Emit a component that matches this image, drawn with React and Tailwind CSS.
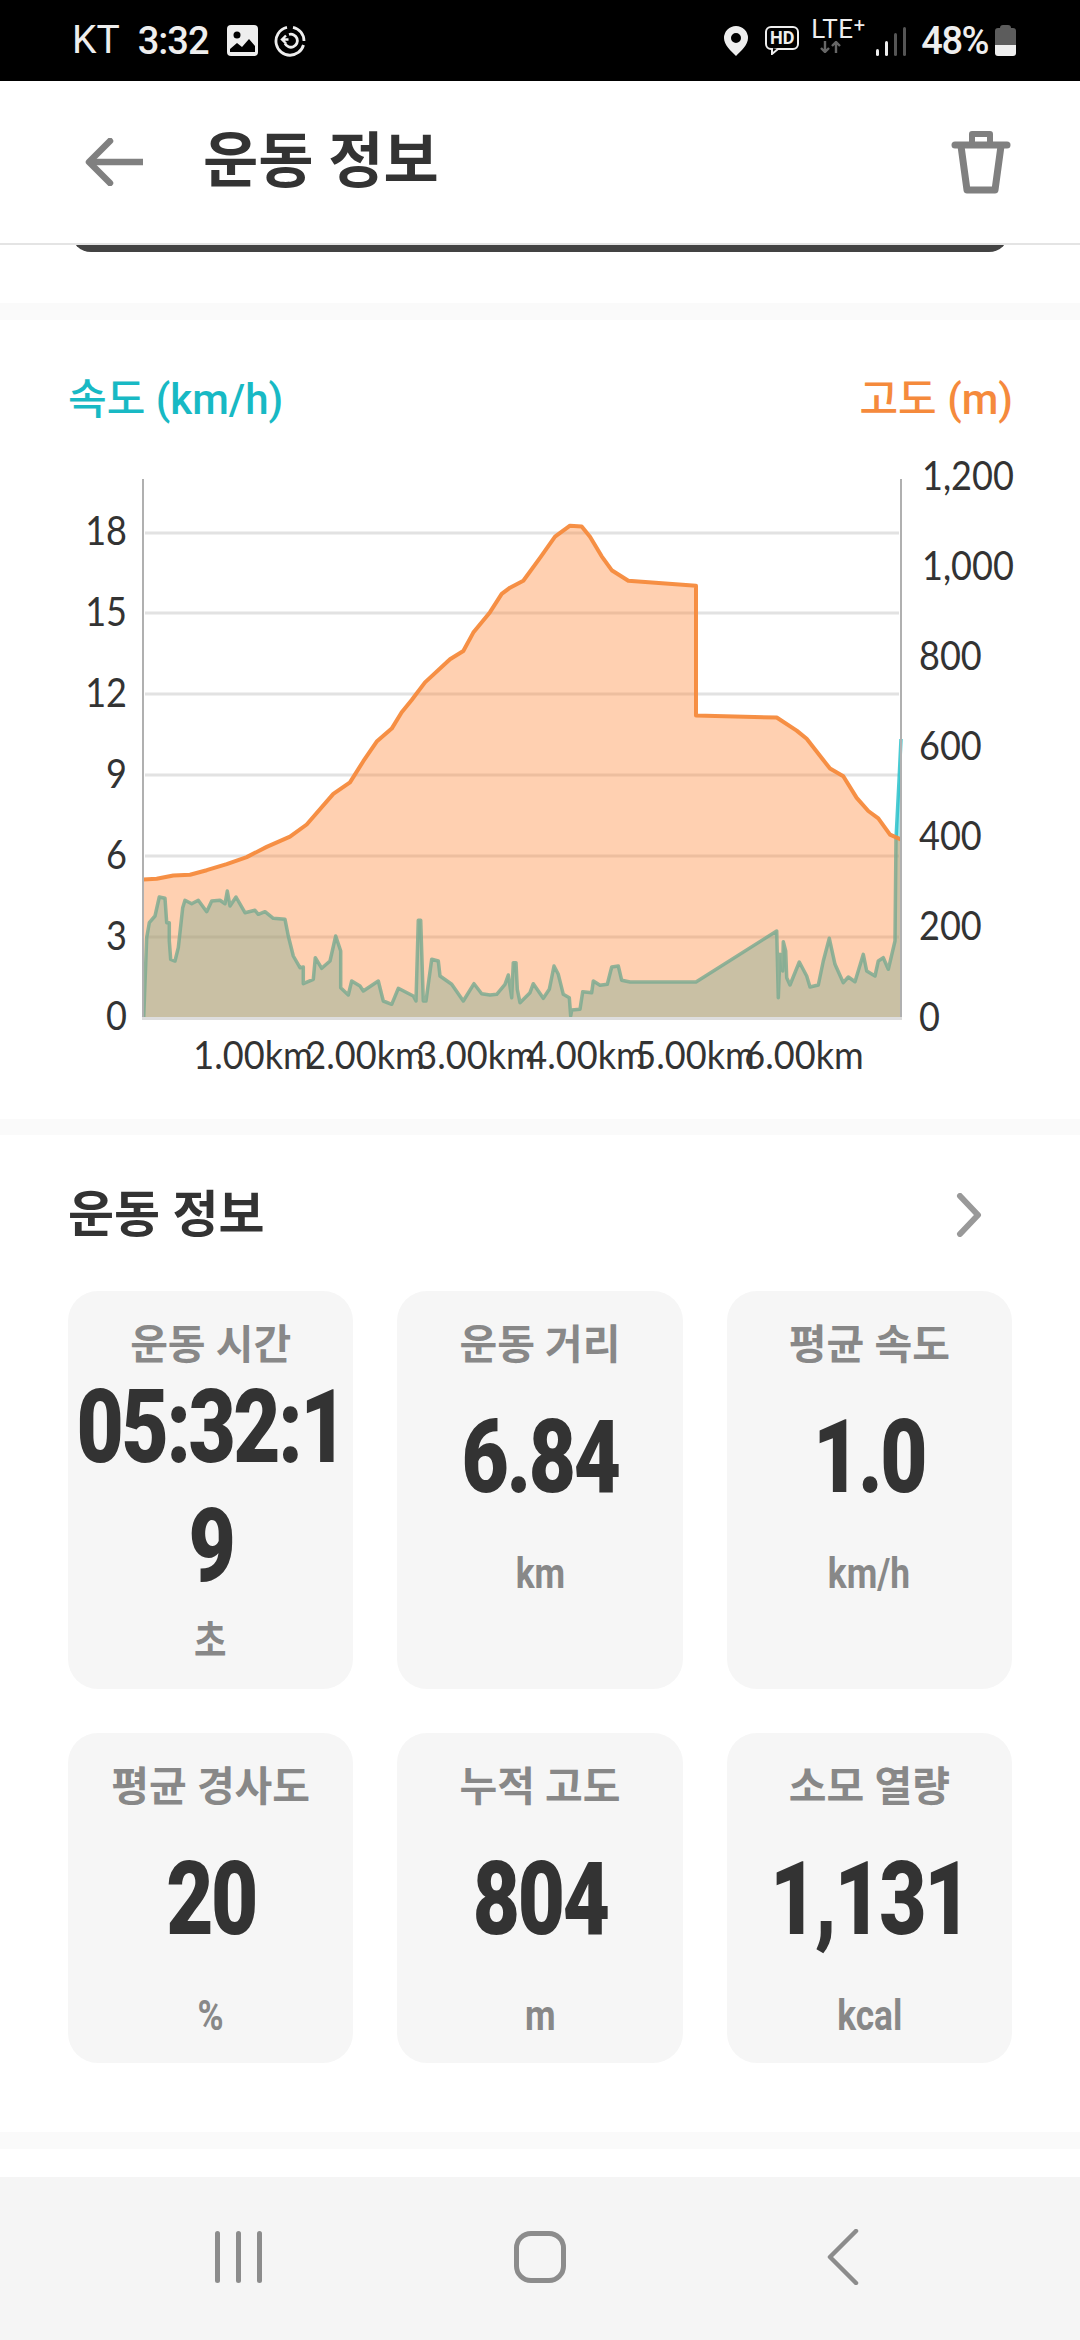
// Sample tables are kept in their own grid units, then mapped to chart coordinates
const scale = (pts, ox, oy, sx, sy) => pts.map(([x, y]) => [ox + x / sx, oy + y / sy])

const elevation = [
  ...scale([
    [310, 1050], [350, 1048], [400, 1040], [450, 1038], [500, 1027], [560, 1012], [620, 995], [680, 970],
    [750, 945], [800, 915], [880, 840], [930, 812], [970, 760], [1010, 712], [1055, 680], [1085, 640],
    [1115, 610], [1155, 567], [1230, 510], [1270, 490], [1300, 445], [1350, 395], [1385, 350], [1410, 335],
    [1450, 318], [1500, 262],
  ], 40, 450, 3, 2.45),
  ...scale([
    [45, 210], [90, 183], [125, 185], [150, 210], [185, 258], [215, 292], [265, 318], [468, 330], [468, 648],
    [710, 653], [770, 685], [800, 705], [870, 778], [910, 797], [950, 850], [985, 882], [1015, 900],
    [1050, 940], [1084, 952],
  ], 540, 450, 3, 2.45),
]

const speed = [
  ...scale([
    [41, 468], [50, 230], [58, 185], [75, 165], [88, 108], [105, 112], [110, 185], [118, 185], [118, 240],
    [122, 295], [135, 300], [145, 260], [158, 140], [165, 118], [185, 128], [205, 118], [230, 152], [245, 120],
    [270, 118], [285, 128], [292, 90], [300, 135], [318, 108], [345, 155], [375, 148], [385, 160], [405, 152],
    [430, 172], [465, 175], [475, 225], [490, 285], [510, 320], [520, 318], [520, 368], [550, 355], [556, 290],
    [575, 322], [600, 300], [617, 225], [632, 270], [632, 380], [655, 402], [665, 360], [690, 375], [700, 390],
    [745, 360], [760, 420], [785, 430], [805, 382], [850, 405], [858, 420], [865, 178], [872, 178], [880, 420],
    [888, 420], [905, 295], [925, 300], [930, 345], [965, 370], [1000, 420], [1032, 368], [1055, 398],
    [1080, 402], [1100, 400], [1125, 370], [1135, 342], [1145, 410], [1150, 305], [1158, 305], [1162, 385],
    [1170, 425],
  ], 130, 860, 3, 3),
  ...scale([
    [0, 395], [10, 368], [40, 412], [58, 385], [72, 315], [85, 340], [100, 400], [118, 410], [122, 465],
    [125, 447], [150, 445], [158, 392], [185, 395], [190, 360], [210, 373], [232, 370], [245, 318], [265, 315],
    [275, 358], [300, 363], [498, 363], [740, 210], [745, 410], [750, 280], [758, 330], [760, 242], [767, 270],
    [770, 350], [780, 372], [808, 303], [830, 345], [840, 378], [865, 372], [880, 300], [898, 232], [915, 310],
    [940, 365], [955, 348], [975, 362], [1000, 280], [1010, 330], [1035, 345], [1045, 300], [1060, 290],
    [1075, 325], [1095, 240],
  ], 530, 860, 3, 3),
  [896, 838], [899, 780], [901, 738],
]

const toLine = (pts) => pts.map(([x, y]) => `${x.toFixed(1)},${y.toFixed(1)}`).join(' ')
const toArea = (pts) => `143,1017 ${toLine(pts)} 901,1017`

const gridY = [532, 612, 693, 774, 855, 936]
const leftTicks = [['18', 529], ['15', 610], ['12', 691], ['9', 772], ['6', 853], ['3', 934], ['0', 1014]]
const rightTicks = [['1,200', 474], ['1,000', 564], ['800', 654], ['600', 744], ['400', 834], ['200', 924], ['0', 1015]]
const distTicks = [['1.00km', 253], ['2.00km', 365], ['3.00km', 476], ['4.00km', 586], ['5.00km', 695], ['6.00km', 804]]

const stats = [
  { label: '운동 시간', lines: ['05:32:1', '9'], unit: '초' },
  { label: '운동 거리', lines: ['6.84'], unit: 'km' },
  { label: '평균 속도', lines: ['1.0'], unit: 'km/h' },
  { label: '평균 경사도', lines: ['20'], unit: '%' },
  { label: '누적 고도', lines: ['804'], unit: 'm' },
  { label: '소모 열량', lines: ['1,131'], unit: 'kcal' },
]

function StatusBar() {
  return (
    <div className="h-[81px] shrink-0 bg-black flex items-center justify-between pl-[72px] pr-[64px] text-[#eeeeee]">
      <div className="flex items-center">
        <span className="text-[39px] leading-none">KT</span>
        <span className="ml-[18px] text-[38px] leading-none font-medium tracking-[-1px]">3:32</span>
        <svg className="ml-[18px]" width="31" height="31" viewBox="0 0 31 31">
          <rect width="31" height="31" rx="4" fill="#eeeeee" />
          <circle cx="10" cy="10" r="3.5" fill="#000" />
          <path d="M3 27v-3l7-6 5 4 7-8 6 7v6z" fill="#000" />
        </svg>
        <svg className="ml-[16px]" width="32" height="32" viewBox="0 0 32 32" fill="none" stroke="#eeeeee" strokeWidth="2.8">
          <path d="M19 2.300A14 14 0 0 1 30 16M29.500 20A14 14 0 0 1 2.400 19.500 14 14 0 0 1 13 2.400" />
          <path d="M15 9.500a6.500 6.500 0 1 1-4 9" />
          <path d="M8 14.500h6.500M12 10.500l-4 4 4 4" strokeWidth="2.400" />
        </svg>
      </div>
      <div className="flex items-center">
        <svg width="24" height="30" viewBox="0 0 24 30">
          <path fillRule="evenodd" d="M12 0a12 12 0 0 1 12 12c0 7-7 13-12 18C7 25 0 19 0 12A12 12 0 0 1 12 0zm0 7a5 5 0 1 0 0 10 5 5 0 0 0 0-10z" fill="#eeeeee" />
        </svg>
        <div className="relative ml-[17px] w-[34px] h-[29px]">
          <div className="w-[34px] h-[24px] border-2 border-[#eeeeee] rounded-[6px] flex items-center justify-center text-[18px] leading-none font-bold">HD</div>
          <svg className="absolute left-[6px] top-[22px]" width="10" height="7" viewBox="0 0 10 7">
            <path d="M1 0v6l6-5" fill="#000" stroke="#eeeeee" strokeWidth="2" />
          </svg>
        </div>
        <div className="ml-[12px] w-[54px] h-[36px] flex flex-col self-start mt-[-3px]">
          <span className="text-[26px] leading-[21px] tracking-[0.5px] whitespace-nowrap">LTE<sup className="text-[20px] leading-none top-[-4px] align-top">+</sup></span>
          <svg className="ml-[9px] mt-[1px]" width="22" height="12" viewBox="0 0 22 12" fill="none" stroke="#666666" strokeWidth="2.4">
            <path d="M5 0v11M1 7l4 4 4-4M16 12V1M12 5l4-4 4 4" />
          </svg>
        </div>
        <div className="ml-[11px] flex items-end gap-[6px] h-[30px]">
          <span className="w-[3px] h-[7px] bg-[#eeeeee] rounded-sm" />
          <span className="w-[3px] h-[15px] bg-[#eeeeee] rounded-sm" />
          <span className="w-[3px] h-[23px] bg-[#555555] rounded-sm" />
          <span className="w-[3px] h-[29px] bg-[#555555] rounded-sm" />
        </div>
        <span className="ml-[15px] text-[38px] leading-none font-medium tracking-[-1.5px]">48%</span>
        <div className="ml-[7px] w-[21px] h-[31px] flex flex-col">
          <span className="mx-auto w-[11px] h-[3px] bg-[#5c5c5c] rounded-t-sm" />
          <span className="h-[17px] bg-[#5c5c5c] rounded-t-[3px]" />
          <span className="h-[11px] bg-[#eeeeee] rounded-b-[3px]" />
        </div>
      </div>
    </div>
  )
}

function Header() {
  return (
    <div className="h-[164px] shrink-0 bg-white border-b-2 border-[#e4e4e4] flex items-center pl-[85px] pr-[69px]">
      <svg width="60" height="48" viewBox="0 0 60 48" fill="none" stroke="#808080" strokeWidth="6.500" strokeLinecap="round" strokeLinejoin="round">
        <path d="M58 24H4" strokeLinecap="butt" />
        <path d="M25 3L4 24l21 21" />
      </svg>
      <h1 className="ml-[58px] text-[60px] leading-none font-bold text-[#333333]">운동 정보</h1>
      <svg className="ml-auto" width="60" height="64" viewBox="0 0 60 64" fill="none" stroke="#808080" strokeWidth="7" strokeLinejoin="round" strokeLinecap="round">
        <path d="M4 15h52" />
        <path d="M21 13V4h18v9" strokeWidth="6" />
        <path d="M10 16l6 44h28l6-44" />
      </svg>
    </div>
  )
}

function ElevationChart() {
  return (
    <svg className="block" width="1080" height="660" viewBox="0 440 1080 660">
      {gridY.map((y) => (
        <line key={y} x1="145" x2="899" y1={y} y2={y} stroke="#e2e2e2" strokeWidth="3" />
      ))}
      <polygon points={toArea(speed)} fill="#1ebec8" fillOpacity="0.4" />
      <polyline points={toLine(speed)} fill="none" stroke="#1ebec8" strokeWidth="3.500" strokeOpacity="0.8" strokeLinejoin="round" />
      <polygon points={toArea(elevation)} fill="#ff8a3c" fillOpacity="0.4" />
      <polyline points={toLine(elevation)} fill="none" stroke="#f58a3c" strokeWidth="4" strokeOpacity="0.95" strokeLinejoin="round" />
      <line x1="143" x2="143" y1="478" y2="1017" stroke="#b0b0b0" strokeWidth="2" />
      <line x1="901" x2="901" y1="478" y2="1017" stroke="#b0b0b0" strokeWidth="2" />
      <line x1="142" x2="902" y1="1017.500" y2="1017.500" stroke="#dddddd" strokeWidth="3" />
      <g className="font-['Lato',sans-serif] font-normal fill-[#333333]">
        {leftTicks.map(([label, y]) => (
          <text key={label} className="text-[41px]" transform={`translate(127 ${y + 15}) scale(0.88 1)`} textAnchor="end">{label}</text>
        ))}
        {rightTicks.map(([label, y]) => (
          <text key={label} className="text-[41px]" transform={`translate(${label.length > 3 ? 922 : 919} ${y + 15}) scale(0.88 1)`}>{label}</text>
        ))}
        {distTicks.map(([label, x]) => (
          <text key={label} className="text-[38px]" transform={`translate(${x} 1068) scale(0.95 1)`} textAnchor="middle">{label}</text>
        ))}
      </g>
    </svg>
  )
}

function StatCard({ label, lines, unit }) {
  return (
    <div className="bg-[#f6f6f6] rounded-[30px] pt-[31px] pb-[24px] flex flex-col items-center">
      <span className="text-[41px] leading-[46px] font-bold text-[#888888] whitespace-nowrap">{label}</span>
      <div className={`min-h-[170px] flex flex-col items-center ${lines.length > 1 ? '' : 'pt-[30px]'}`}>
        {lines.map((line) => (
          <span key={line} className="h-[119px] text-[102px] leading-[119px] font-black tracking-[-3px] text-[#333333] whitespace-nowrap scale-x-[0.8]">
            {line}
          </span>
        ))}
      </div>
      <span className="mt-[13px] text-[42px] leading-[46px] font-bold text-[#888888] scale-x-[0.84]">{unit}</span>
    </div>
  )
}

function NavBar() {
  return (
    <div className="mt-auto h-[163px] shrink-0 bg-[#f5f5f5] flex items-center pb-[4px]">
      <div className="flex-1 flex justify-center">
        <div className="mr-[38px] flex gap-[16px]">
          <span className="w-[5px] h-[52px] bg-[#8c8c8c] rounded-full" />
          <span className="w-[5px] h-[52px] bg-[#8c8c8c] rounded-full" />
          <span className="w-[5px] h-[52px] bg-[#8c8c8c] rounded-full" />
        </div>
      </div>
      <div className="w-[52px] h-[52px] border-[5px] border-[#8c8c8c] rounded-[17px]" />
      <div className="flex-1 flex justify-center">
        <svg className="ml-[40px]" width="32" height="56" viewBox="0 0 32 56" fill="none" stroke="#8c8c8c" strokeWidth="4.500" strokeLinecap="round" strokeLinejoin="round">
          <path d="M29 2L3 28l26 26" />
        </svg>
      </div>
    </div>
  )
}

export default function App() {
  return (
    <div className="w-[1080px] h-[2340px] overflow-hidden flex flex-col bg-white font-['Roboto','Noto_Sans_CJK_KR',sans-serif]">
      <StatusBar />
      <Header />

      {/* map card scrolled under the header */}
      <div className="h-[58px] shrink-0 overflow-hidden">
        <div className="mx-[71px] h-[40px] -mt-[33px] bg-[#434343] rounded-[30px]" />
      </div>

      <div className="h-[17px] shrink-0 bg-[#fafafa]" />

      <section className="shrink-0 pt-[52px] pb-[18px]">
        <div className="pl-[68px] pr-[67px] flex justify-between text-[42px] leading-[56px] font-medium">
          <span className="text-[#18b9c4]">속도 (km/h)</span>
          <span className="text-[#f58a3c]">고도 (m)</span>
        </div>
        <div className="mt-[13px]">
          <ElevationChart />
        </div>
      </section>

      <div className="h-[16px] shrink-0 bg-[#fafafa]" />

      <section className="shrink-0 px-[68px] pt-[50px] pb-[69px]">
        <div className="h-[60px] flex items-center justify-between">
          <h2 className="text-[50px] leading-none font-bold text-[#333333]">운동 정보</h2>
          <svg className="mr-[30px]" width="26" height="44" viewBox="0 0 26 44" fill="none" stroke="#999999" strokeWidth="6" strokeLinecap="round" strokeLinejoin="round">
            <path d="M4 3l18 19L4 41" />
          </svg>
        </div>
        <div className="mt-[46px] grid grid-cols-3 gap-x-[44px] gap-y-[44px]">
          {stats.map((stat) => (
            <StatCard key={stat.label} {...stat} />
          ))}
        </div>
      </section>

      <div className="h-[17px] shrink-0 bg-[#fafafa]" />

      <NavBar />
    </div>
  )
}
